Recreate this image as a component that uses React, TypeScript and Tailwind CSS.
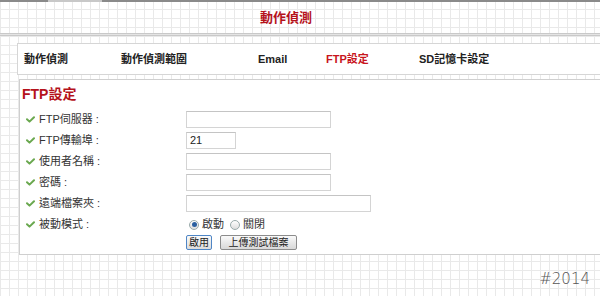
import React from 'react';

const cjk = "font-['Liberation_Sans','Noto_Sans_CJK_TC',sans-serif]";

const Check = () => (
  <svg width="9" height="7" viewBox="0 0 9 7" className="shrink-0">
    <path d="M1 3.2 L3.5 5.6 L8 1.2" fill="none" stroke="#6aa84f" strokeWidth="2" strokeLinecap="round" strokeLinejoin="round" />
  </svg>
);

const Row = ({ label, children }: { label: string; children?: React.ReactNode }) => (
  <div className="flex h-[21px] items-center">
    <div className="flex w-[166px] items-center gap-[4px] pl-[6px] text-[11px] text-[#333]">
      <Check />
      <span>{label}</span>
    </div>
    {children}
  </div>
);

const Field = ({ w, value }: { w: string; value?: string }) => (
  <div className={`${w} flex h-[17px] items-center border border-[#d4d4d4] border-t-[#c4c4c4] bg-white px-[3px] text-[11px] text-[#222]`}>
    {value}
  </div>
);

const Radio = ({ on, label }: { on?: boolean; label: string }) => (
  <span className="flex items-center gap-[3px]">
    <span className="flex h-[10px] w-[10px] items-center justify-center rounded-full border border-[#9aa] bg-gradient-to-b from-[#fff] to-[#ddd]">
      {on && <span className="h-[5px] w-[5px] rounded-full bg-[#2a5fa0]" />}
    </span>
    <span>{label}</span>
  </span>
);

export default function App() {
  const tabs = [
    { t: '動作偵測', x: 'w-[97px]' },
    { t: '動作偵測範圍', x: 'w-[137px]' },
    { t: 'Email', x: 'w-[68px]' },
    { t: 'FTP設定', x: 'w-[93px]', active: true },
    { t: 'SD記憶卡設定', x: 'w-[120px]' },
  ];

  return (
    <div
      className={`${cjk} relative h-[296px] w-[600px] overflow-hidden bg-white bg-[linear-gradient(#e9e9e9_1px,transparent_1px),linear-gradient(90deg,#e9e9e9_1px,transparent_1px)] bg-[size:9px_9px]`}
    >
      {/* top strip */}
      <div className="flex h-[2px] bg-[#8a8a8a]">
        <div className="ml-[48px] w-[54px] bg-[#c8c8c8]" />
      </div>

      {/* page title */}
      <div className="flex h-[31px] items-center pl-[260px] text-[13px] font-bold text-[#b5121b]">
        動作偵測
      </div>

      {/* separator */}
      <div className="h-[3px] border-y border-[#c9c9c9] bg-[#e4e4e4]" />

      {/* tabs */}
      <div className="ml-[17px] mt-[7px] flex h-[32px] items-center border border-r-0 border-[#d6d6d6] bg-white pl-[6px] text-[11px] font-bold text-[#222]">
        {tabs.map((tab) => (
          <span key={tab.t} className={`${tab.x} shrink-0 ${tab.active ? 'text-[#c8151d]' : ''}`}>
            {tab.t}
          </span>
        ))}
      </div>

      {/* content */}
      <div className="ml-[19px] mt-[4px] h-[176px] border border-r-0 border-[#cfcfcf] bg-white">
        <div className="pl-[2px] pt-[6px] text-[14px] font-bold leading-[17px] text-[#b5121b]">FTP設定</div>
        <div className="mt-[6px]">
          <Row label="FTP伺服器 :">
            <Field w="w-[145px]" />
          </Row>
          <Row label="FTP傳輸埠 :">
            <Field w="w-[50px]" value="21" />
          </Row>
          <Row label="使用者名稱 :">
            <Field w="w-[145px]" />
          </Row>
          <Row label="密碼 :">
            <Field w="w-[145px]" />
          </Row>
          <Row label="遠端檔案夾 :">
            <Field w="w-[185px]" />
          </Row>
          <Row label="被動模式 :">
            <div className="flex items-center gap-[6px] pl-[3px] text-[11px] text-[#333]">
              <Radio on label="啟動" />
              <Radio label="關閉" />
            </div>
          </Row>
          <div className="flex items-center gap-[8px] pl-[166px] text-[10px] text-[#222]">
            <button className="h-[15px] w-[26px] rounded-[2px] border border-[#4f86c6] bg-gradient-to-b from-[#fafafa] to-[#dcdcdc] leading-none">
              啟用
            </button>
            <button className="h-[15px] w-[77px] rounded-[2px] border border-[#8c8c8c] bg-gradient-to-b from-[#fafafa] to-[#d8d8d8] leading-none">
              上傳測試檔案
            </button>
          </div>
        </div>
      </div>

      <div className="absolute right-[10px] top-[268px] font-['DejaVu_Sans',sans-serif] text-[15px] font-light text-[#555]">
        #2014
      </div>
    </div>
  );
}
